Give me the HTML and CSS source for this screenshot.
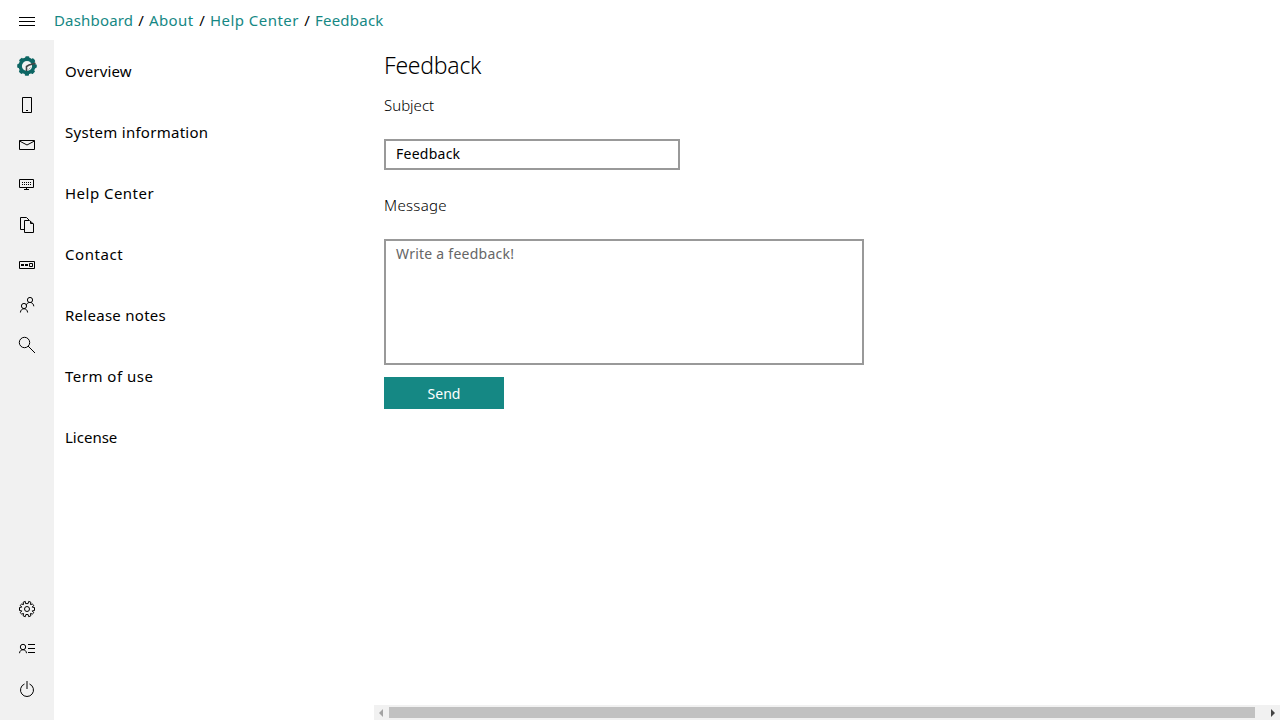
FILE: index.html
```html
<!DOCTYPE html>
<html lang="en">
<head>
<meta charset="utf-8">
<title>Feedback</title>
<link rel="stylesheet" href="styles.css">
</head>
<body>
<header class="topbar">
  <button class="icon-button menu" aria-label="Menu"><svg class="icon" viewBox="0 0 20 20"><path d="M2 6.500h16M2 10.500h16M2 14.500h16"/></svg></button>
  <nav class="crumbs"><a class="c1" href="#">Dashboard</a><span class="sep">/</span><a class="c2" href="#">About</a><span class="sep">/</span><a class="c3" href="#">Help Center</a><span class="sep">/</span><a class="c4" href="#">Feedback</a></nav>
</header>
<div class="body">
  <aside class="rail">
    <div class="group">
      <a class="icon-button logo"><svg class="icon" viewBox="0 0 20 20"><circle cx="10" cy="10" r="6.800" stroke="#0d6664" stroke-width="3.400"/><circle cx="10" cy="10" r="8.600" stroke="#0d6664" stroke-width="2.400" stroke-linecap="round" stroke-dasharray="2 4.754" stroke-dashoffset="1"/><path d="M9.500 15v-4.500L12 9l6.500-1.800" stroke="#444" stroke-width="1.600"/><path d="M11.500 13.500l2-2" stroke="#aaa"/></svg></a>
      <a class="icon-button"><svg class="icon" viewBox="0 0 20 20"><path d="M5.500 2.500h9v15h-9zM9 15.500h2"/></svg></a>
      <a class="icon-button"><svg class="icon" viewBox="0 0 20 20"><path d="M2.500 5.500h15v9h-15zM2.500 6l7.500 4 7.500-4"/></svg></a>
      <a class="icon-button"><svg class="icon" viewBox="0 0 20 20"><path d="M2.500 4.500h14v8h-14zM9.500 12.500v2M7 14.500h5"/><path stroke-dasharray="1 1" d="M5 7.500h9M5 9.500h9"/></svg></a>
      <a class="icon-button"><svg class="icon" viewBox="0 0 20 20"><path d="M7 14.500H3.500v-12h6L12 5M7.500 5.500h5l4 3.500v8.500h-9zM13.500 6v2.500h3"/></svg></a>
      <a class="icon-button"><svg class="icon" viewBox="0 0 20 20"><path d="M2.500 6.500h15v7h-15zM12.500 8.500h3v3h-3z"/><path d="M4 10h3M8 10h3" stroke-width="2"/></svg></a>
      <a class="icon-button"><svg class="icon" viewBox="0 0 20 20"><circle cx="7" cy="11" r="2.600"/><path d="M3.400 17.500c.2-5 7-5 7.200 0"/><circle cx="13" cy="5" r="2.600"/><path d="M9.300 10.500c.3-4 7-4.500 7.500.8"/></svg></a>
      <a class="icon-button"><svg class="icon" viewBox="0 0 20 20"><circle cx="7.500" cy="7.500" r="5.200"/><path d="M11 11l7 7"/></svg></a>
    </div>
    <div class="group">
      <a class="icon-button"><svg class="icon" viewBox="0 0 20 20"><circle cx="10" cy="10" r="2.500"/><path stroke-linejoin="round" d="M8.500 4.600L8.300 2.400 6.200 3.200 6.500 5.500 4.600 5.100 3.200 6.400 4.800 8.100 2.500 8.500v3l2.300.4-1.600 1.800 1.400 1.300 1.900-.5-.3 2.400 2.100.8.600-2.200h2.200l.6 2.200 2.100-.8-.3-2.400 1.900.5 1.400-1.300-1.600-1.800 2.300-.4v-3l-2.300-.4 1.600-1.700-1.400-1.300-1.900.4.300-2.300-2.100-.8-.6 2.200z"/></svg></a>
      <a class="icon-button"><svg class="icon" viewBox="0 0 20 20"><circle cx="6" cy="8" r="2.700"/><path d="M2.500 14.200c.2-4.600 6.800-4.600 7 0"/><path d="M11 5.500h7M11 9.500h7M11 13.500h7"/></svg></a>
      <a class="icon-button"><svg class="icon" viewBox="0 0 20 20"><path d="M7.500 5a6.500 6.500 0 1 0 5 0"/><path d="M10 2v8" stroke="#777" stroke-width="2"/></svg></a>
    </div>
  </aside>
  <nav class="sections">
    <a class="s1">Overview</a><a class="s2">System information</a><a class="s3">Help Center</a><a class="s4">Contact</a><a class="s5">Release notes</a><a class="s6">Term of use</a><a class="s7">License</a>
  </nav>
  <main class="content">
    <form class="form">
      <h1 class="title">Feedback</h1>
      <label class="label subject" for="subject">Subject</label>
      <input class="field input" id="subject" value="Feedback">
      <label class="label message" for="message">Message</label>
      <textarea class="field area" id="message" placeholder="Write a feedback!"></textarea>
      <button class="send" type="button">Send</button>
    </form>
    <div class="scrollbar">
      <svg class="arrow" viewBox="0 0 15 15"><path d="M9 4v8L5 8z" fill="#a3a3a3" stroke="none"/></svg>
      <div class="thumb"></div>
      <svg class="arrow last" viewBox="0 0 15 15"><path d="M6 4v8l4-4z" fill="#444" stroke="none"/></svg>
    </div>
  </main>
</div>
</body>
</html>
```
FILE: styles.css
```css
* { box-sizing: border-box; }
body { margin: 0; height: 720px; overflow: hidden; background: #fff; color: #000; font: 15px "Noto Sans", "Open Sans", sans-serif; display: flex; flex-direction: column; }
a { color: inherit; text-decoration: none; }
.topbar { height: 40px; display: flex; align-items: center; }
.icon-button { width: 54px; height: 40px; padding: 0; border: 0; background: none; display: flex; align-items: center; justify-content: center; }
.menu, .logo { padding-top: 2px; }
.icon { width: 20px; height: 20px; fill: none; stroke: #000; stroke-width: 1; }
.crumbs { display: flex; line-height: 40px; white-space: nowrap; }
.crumbs a { color: #158884; }
.sep { width: 16px; text-align: center; }
.c1 { width: 79px; letter-spacing: .17px; }
.c2 { width: 45px; letter-spacing: .4px; }
.c3 { width: 89px; letter-spacing: .45px; }
.c4 { letter-spacing: .22px; }
.body { height: 680px; display: flex; }
.rail { width: 54px; background: #f1f1f1; display: flex; flex-direction: column; justify-content: space-between; padding: 5px 0 11px; }
.group { display: flex; flex-direction: column; }
.sections { width: 320px; padding: 1px 11px; display: flex; flex-direction: column; }
.sections a { height: 61px; line-height: 61px; white-space: nowrap; letter-spacing: .27px; }
.sections .s1 { letter-spacing: .17px; }
.sections .s3 { letter-spacing: .48px; }
.sections .s4 { letter-spacing: .55px; }
.sections .s6 { letter-spacing: .5px; }
.sections .s7 { letter-spacing: 0; }
.content { flex: 1; display: flex; flex-direction: column; justify-content: space-between; }
.form { padding: 9px 10px; display: flex; flex-direction: column; align-items: flex-start; }
.title { margin: 0; font-size: 23px; font-weight: 300; line-height: 32px; letter-spacing: -.25px; }
.label { line-height: 24px; font-weight: 300; color: #000; }
.subject { margin-top: 12px; }
.message { margin-top: 23px; letter-spacing: .3px; }
.field { display: block; margin: 22px 0 0; border: 2px solid #999; border-radius: 0; padding: 3px 10px; outline: none; resize: none; background: #fff; color: #000; font: 14px/20px "Noto Sans", sans-serif; letter-spacing: .25px; }
.input { width: 296px; height: 31px; padding: 2px 10px 4px; }
.area { width: 480px; height: 126px; }
.area::placeholder { color: #666; }
.send { width: 120px; height: 32px; margin-top: 12px; padding: 1px 0 0; border: 0; background: #158884; color: #fff; font: 14px "Noto Sans", sans-serif; }
.scrollbar { height: 15px; background: #f1f1f1; display: flex; align-items: center; }
.arrow { width: 15px; height: 15px; }
.last { margin-left: 10px; }
.thumb { width: 866px; height: 11px; background: #c1c1c1; }
```
